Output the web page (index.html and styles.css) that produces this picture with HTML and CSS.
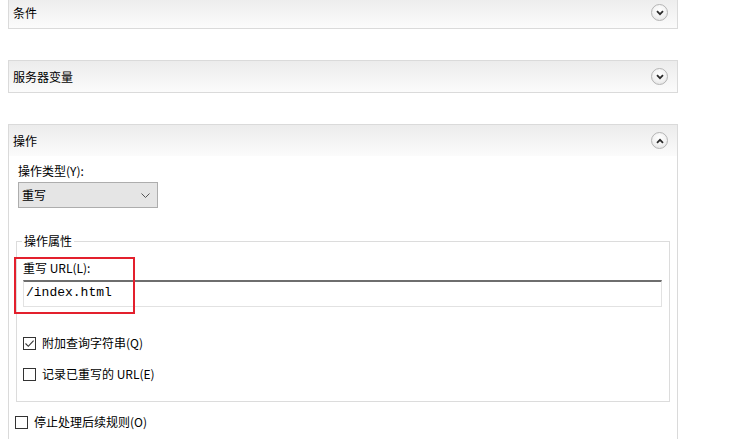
FILE: index.html
```html
<!DOCTYPE html>
<html lang="zh-CN">
<head>
<meta charset="utf-8">
<title>URL 重写 - 操作</title>
<link rel="stylesheet" href="styles.css">
</head>
<body>
<div class="panels">
  <section class="panel">
    <div class="panel-head">
      <span class="panel-title">条件</span>
      <span class="toggle"><svg viewBox="0 0 8 6" width="8" height="6"><path d="M1 1.2 L4 4.2 L7 1.2" fill="none" stroke="#2b2b2b" stroke-width="1.8"/></svg></span>
    </div>
  </section>

  <section class="panel">
    <div class="panel-head">
      <span class="panel-title">服务器变量</span>
      <span class="toggle"><svg viewBox="0 0 8 6" width="8" height="6"><path d="M1 1.2 L4 4.2 L7 1.2" fill="none" stroke="#2b2b2b" stroke-width="1.8"/></svg></span>
    </div>
  </section>

  <section class="panel panel-open">
    <div class="panel-head">
      <span class="panel-title">操作</span>
      <span class="toggle"><svg viewBox="0 0 8 6" width="8" height="6"><path d="M1 4.8 L4 1.8 L7 4.8" fill="none" stroke="#2b2b2b" stroke-width="1.8"/></svg></span>
    </div>
    <div class="panel-body">
      <div class="field-label">操作类型(Y):</div>
      <div class="select">
        <span>重写</span>
        <svg class="select-arrow" viewBox="0 0 9 5" width="9" height="5"><path d="M0.5 0.5 L4.5 4.5 L8.5 0.5" fill="none" stroke="#555" stroke-width="1"/></svg>
      </div>

      <fieldset class="props">
        <legend>操作属性</legend>
        <div class="url-field">
          <div class="field-label">重写 URL(L):</div>
          <div class="text-input">/index.html</div>
          <div class="highlight"></div>
        </div>
        <div class="check-row first">
          <span class="check"><svg viewBox="0 0 11 11" width="11" height="11"><path d="M1.5 5.5 L4.3 8.3 L9.6 2.6" fill="none" stroke="#333" stroke-width="1.1"/></svg></span>
          <span>附加查询字符串(Q)</span>
        </div>
        <div class="check-row">
          <span class="check"></span>
          <span>记录已重写的 URL(E)</span>
        </div>
      </fieldset>

      <div class="check-row outer">
        <span class="check"></span>
        <span>停止处理后续规则(O)</span>
      </div>
    </div>
  </section>
</div>
</body>
</html>
```

FILE: styles.css
```css
html, body {
  margin: 0;
  padding: 0;
  background: #ffffff;
}

body {
  font-family: "Noto Sans CJK SC", "Liberation Sans", sans-serif;
  font-size: 12px;
  line-height: 16px;
  color: #000000;
  height: 439px;
  overflow: hidden;
}

.panels {
  margin-top: -4px;
  margin-left: 8px;
  width: 670px;
  display: flex;
  flex-direction: column;
  gap: 31px;
}

.panel {
  border: 1px solid #dadada;
  box-sizing: border-box;
}

.panel-open {
  border-bottom: none;
  min-height: 330px;
}

.panel-head {
  height: 31px;
  box-sizing: border-box;
  display: flex;
  align-items: center;
  justify-content: space-between;
  padding: 0 9px 0 4px;
  background: linear-gradient(#ececec, #fbfbfb);
}

.toggle {
  width: 17px;
  height: 17px;
  box-sizing: border-box;
  border: 1px solid #b4b4b4;
  border-radius: 50%;
  background: radial-gradient(circle at 50% 35%, #ffffff 0%, #f2f2f2 55%, #dcdcdc 100%);
  display: flex;
  align-items: center;
  justify-content: center;
}

.panel-body {
  padding: 7px 7px 0 7px;
}

.panel-body > .field-label,
.panel-body > .select {
  margin-left: 2px;
}

.select {
  margin-top: 3px;
  width: 140px;
  height: 26px;
  box-sizing: border-box;
  background: #e5e5e5;
  border: 1px solid #adadad;
  display: flex;
  align-items: center;
  justify-content: space-between;
  padding: 0 7px 0 3px;
}

.select-arrow {
  display: block;
}

.props {
  margin: 25px 0 0 0;
  padding: 0 7px 19px 6px;
  border: 1px solid #dcdcdc;
  min-width: 0;
}

.props legend {
  padding: 0 2px;
  margin-left: -1px;
  line-height: 16px;
}

.url-field {
  position: relative;
  margin-top: 11px;
}

.text-input {
  margin-top: 4px;
  height: 27px;
  box-sizing: border-box;
  border: 1px solid #e2e2e2;
  border-top: 2px solid #6e6e6e;
  font-family: "Liberation Mono", monospace;
  font-size: 13px;
  line-height: 22px;
  padding: 0 0 0 2px;
  color: #000;
}

.highlight {
  position: absolute;
  left: -9px;
  top: -3px;
  width: 121px;
  height: 57px;
  box-sizing: border-box;
  border: 2px solid #e3202d;
  pointer-events: none;
}

.check-row {
  display: flex;
  align-items: center;
  gap: 6px;
  height: 16px;
  margin-top: 15px;
}

.check-row.first {
  margin-top: 28px;
}

.check {
  width: 13px;
  height: 13px;
  box-sizing: border-box;
  border: 1px solid #333333;
  background: #ffffff;
  display: flex;
  align-items: center;
  justify-content: center;
}

.check-row.outer {
  margin-top: 12px;
  margin-left: -1px;
}
```
